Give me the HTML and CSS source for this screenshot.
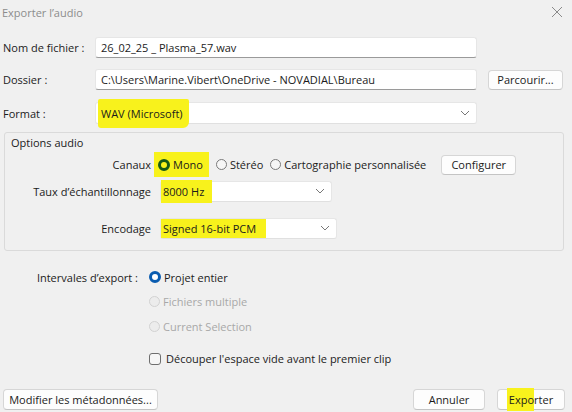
FILE: index.html
```html
<!DOCTYPE html>
<html lang="fr">
<head>
<meta charset="utf-8">
<title>Exporter l'audio</title>
<link rel="stylesheet" href="styles.css">
</head>
<body>
<div class="dialog">
  <div class="titlebar">
    <span class="title">Exporter l’audio</span>
    <svg class="close" width="12" height="12" viewBox="0 0 12 12"><path d="M1 1L11 11M11 1L1 11" stroke="#8a8a8a" stroke-width="1"/></svg>
  </div>

  <div class="row r1">
    <span class="lbl">Nom de fichier :</span>
    <div class="input">26_02_25 _ Plasma_57.wav</div>
  </div>
  <div class="row r2">
    <span class="lbl">Dossier :</span>
    <div class="input">C:\Users\Marine.Vibert\OneDrive - NOVADIAL\Bureau</div>
    <button class="btn browse">Parcourir...</button>
  </div>
  <div class="row r3">
    <span class="lbl">Format :</span>
    <div class="input select wide"><mark class="hl hl-format">WAV (Microsoft)</mark><svg class="chev" width="10" height="6" viewBox="0 0 10 6"><path d="M1 1L5 5L9 1" fill="none" stroke="#777" stroke-width="1"/></svg></div>
  </div>

  <div class="group">
    <div class="group-title">Options audio</div>
    <div class="grow g1">
      <span class="glbl">Canaux</span>
      <div class="radios">
        <mark class="hl hl-mono"><span class="radio on-green"></span>Mono</mark>
        <span class="opt"><span class="radio"></span>Stéréo</span>
        <span class="opt"><span class="radio"></span>Cartographie personnalisée</span>
        <button class="btn config">Configurer</button>
      </div>
    </div>
    <div class="grow g2">
      <span class="glbl">Taux d’échantillonnage</span>
      <div class="input select rate"><mark class="hl hl-rate">8000 Hz</mark><svg class="chev" width="10" height="6" viewBox="0 0 10 6"><path d="M1 1L5 5L9 1" fill="none" stroke="#777" stroke-width="1"/></svg></div>
    </div>
    <div class="grow g3">
      <span class="glbl">Encodage</span>
      <div class="input select enc"><mark class="hl hl-enc">Signed 16-bit PCM</mark><svg class="chev" width="10" height="6" viewBox="0 0 10 6"><path d="M1 1L5 5L9 1" fill="none" stroke="#777" stroke-width="1"/></svg></div>
    </div>
  </div>

  <div class="export">
    <div class="erow first">
      <span class="elbl">Intervales d’export :</span>
      <span class="opt"><span class="radio on-blue"></span>Projet entier</span>
    </div>
    <div class="erow">
      <span class="elbl"></span>
      <span class="opt dis"><span class="radio"></span>Fichiers multiple</span>
    </div>
    <div class="erow">
      <span class="elbl"></span>
      <span class="opt dis"><span class="radio"></span>Current Selection</span>
    </div>
    <div class="erow check-row">
      <span class="elbl"></span>
      <span class="opt"><span class="check"></span>Découper l'espace vide avant le premier clip</span>
    </div>
  </div>

  <div class="footer">
    <button class="btn meta">Modifier les métadonnées...</button>
    <div class="spacer"></div>
    <button class="btn cancel">Annuler</button>
    <button class="btn export-btn"><mark class="hl hl-exp">Expo</mark>rter</button>
  </div>
</div>
</body>
</html>
```
FILE: styles.css
```css
* { box-sizing: border-box; }
html, body { margin: 0; padding: 0; }
body {
  width: 572px;
  height: 412px;
  background: #f0f0f0;
  font-family: "Open Sans", "Noto Sans", sans-serif;
  font-size: 11px;
  color: #1b1b1b;
  overflow: hidden;
}
.dialog { width: 572px; height: 412px; display: flex; flex-direction: column; }

.titlebar {
  height: 24px;
  display: flex;
  align-items: center;
  justify-content: space-between;
  padding: 0 9px 0 2px;
}
.title { color: #8c8c8c; }
.close { display: block; }

.row { display: flex; align-items: center; height: 21px; padding-left: 3px; }
.r1 { margin-top: 13px; }
.r2 { margin-top: 11px; }
.r3 { margin-top: 12px; height: 22px; }
.lbl { width: 92px; }

.input {
  height: 21px;
  width: 382px;
  background: #fff;
  border: 1px solid #e6e6e6;
  border-bottom-color: #9a9a9a;
  border-radius: 3px;
  display: flex;
  align-items: center;
  padding-left: 5px;
  white-space: nowrap;
}
.select { justify-content: space-between; padding-right: 6px; border-bottom-color: #e0e0e0; }
.wide { height: 22px; }
.chev { display: block; flex: none; }

.btn {
  font-family: inherit;
  font-size: 11px;
  color: #1b1b1b;
  background: #fdfdfd;
  border: 1px solid #d6d6d6;
  border-bottom-color: #c4c4c4;
  border-radius: 4px;
  height: 20px;
  padding: 0 4px;
  display: flex;
  align-items: center;
  justify-content: center;
  white-space: nowrap;
}
.browse { margin-left: 11px; width: 75px; }

.hl {
  background: #f8f21c;
  color: #1b1b1b;
  display: inline-flex;
  align-items: center;
}
.hl-format { margin-left: -3px; padding: 7px 6px 7px 3px; border-radius: 2px 2px 6px 3px; }
.hl-rate { margin-left: -5px; padding: 4px 8px 4px 2px; }
.hl-enc { margin-left: -5px; padding: 2px 10px 2px 2px; }
.hl-mono { padding: 5px 6px 5px 4px; margin-left: -6px; margin-right: 7px; }
.hl-exp { padding: 4px 0 4px 2px; margin-left: -2px; }

.group {
  margin: 8px 8px 0 4px;
  height: 119px;
  border: 1px solid #dadada;
  border-radius: 3px;
  display: flex;
  flex-direction: column;
}
.group-title { padding: 2px 0 0 6px; height: 17px; line-height: 16px; }
.grow { display: grid; grid-template-columns: 146px auto; column-gap: 9px; align-items: center; }
.glbl { text-align: right; }
.g1 { margin-top: 2px; height: 22px; }
.g2 { margin-top: 6px; height: 22px; }
.g3 { margin-top: 15px; height: 22px; }
.radios { display: flex; align-items: center; }
.opt { display: inline-flex; align-items: center; white-space: nowrap; margin-right: 7px; }
.radio {
  width: 11px; height: 11px;
  border: 1px solid #7a7a7a;
  border-radius: 50%;
  background: #f6f6f6;
  margin-right: 3px;
  flex: none;
}
.radio.on-green { border: 3.5px solid #165a16; background: #f8f21c; width: 12px; height: 12px; }
.radio.on-blue { border: 3.5px solid #0a5cb0; background: #fff; width: 12px; height: 12px; }
.config { margin-left: 8px; width: 75px; }
.rate { width: 172px; }
.enc { width: 177px; }

.export { margin-top: 14px; }
.erow { display: grid; grid-template-columns: 138px auto; column-gap: 11px; align-items: center; height: 24.5px; }
.elbl { text-align: right; }
.opt.dis { color: #a8a8a8; }
.opt.dis .radio { border-color: #d2d2d2; background: #ececec; }
.check-row { margin-top: 8px; }
.check {
  width: 12px; height: 12px;
  border: 1px solid #6e6e6e;
  border-radius: 3px;
  background: #f6f6f6;
  margin-right: 5px;
}

.footer { margin-top: auto; margin-bottom: 2px; display: flex; align-items: center; padding: 0 7px 0 3px; }
.meta { width: 155px; height: 21px; }
.spacer { flex: 1; }
.cancel { width: 72px; margin-right: 12px; height: 21px; }
.export-btn { width: 68px; height: 21px; }
```
